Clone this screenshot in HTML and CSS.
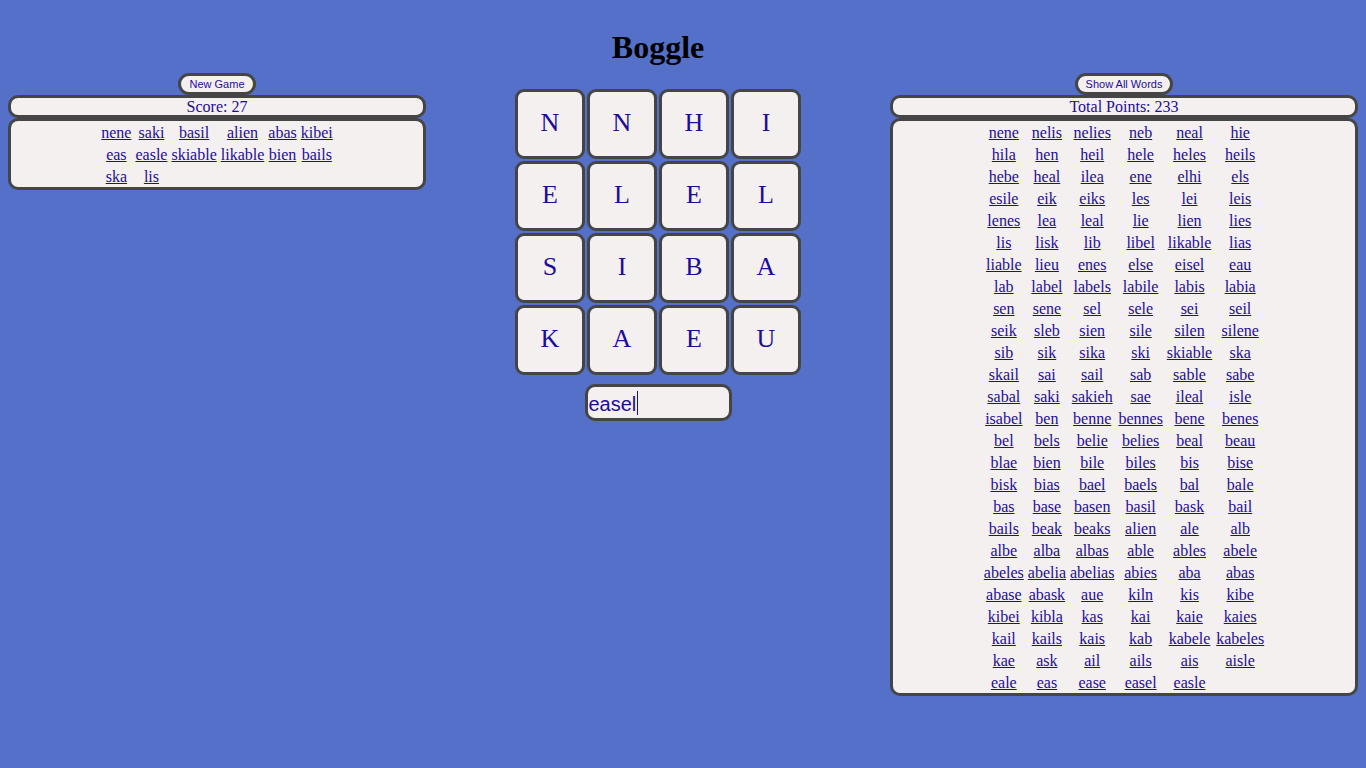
FILE: index.html
```html
<!DOCTYPE html>
<html lang="en">
<head>
<meta charset="utf-8">
<title>Boggle</title>
<link rel="stylesheet" href="styles.css">
</head>
<body>
<div class="page">
  <section class="side side-left">
    <button class="pill" type="button">New Game</button>
    <div class="box score">Score: 27</div>
    <div class="box words">
      <table class="word-table">
        <tr><td><a href="#">nene</a></td><td><a href="#">saki</a></td><td><a href="#">basil</a></td><td><a href="#">alien</a></td><td><a href="#">abas</a></td><td><a href="#">kibei</a></td></tr>
        <tr><td><a href="#">eas</a></td><td><a href="#">easle</a></td><td><a href="#">skiable</a></td><td><a href="#">likable</a></td><td><a href="#">bien</a></td><td><a href="#">bails</a></td></tr>
        <tr><td><a href="#">ska</a></td><td><a href="#">lis</a></td><td></td><td></td><td></td><td></td></tr>
      </table>
    </div>
  </section>

  <main class="center">
    <h1 class="title">Boggle</h1>
    <div class="board">
      <div class="tile">N</div><div class="tile">N</div><div class="tile">H</div><div class="tile">I</div>
      <div class="tile">E</div><div class="tile">L</div><div class="tile">E</div><div class="tile">L</div>
      <div class="tile">S</div><div class="tile">I</div><div class="tile">B</div><div class="tile">A</div>
      <div class="tile">K</div><div class="tile">A</div><div class="tile">E</div><div class="tile">U</div>
    </div>
    <div class="guess" role="textbox" aria-label="Guess">easel<span class="caret"></span></div>
  </main>

  <section class="side side-right">
    <button class="pill" type="button">Show All Words</button>
    <div class="box score">Total Points: 233</div>
    <div class="box words">
      <table class="word-table">
        <tr><td><a href="#">nene</a></td><td><a href="#">nelis</a></td><td><a href="#">nelies</a></td><td><a href="#">neb</a></td><td><a href="#">neal</a></td><td><a href="#">hie</a></td></tr>
        <tr><td><a href="#">hila</a></td><td><a href="#">hen</a></td><td><a href="#">heil</a></td><td><a href="#">hele</a></td><td><a href="#">heles</a></td><td><a href="#">heils</a></td></tr>
        <tr><td><a href="#">hebe</a></td><td><a href="#">heal</a></td><td><a href="#">ilea</a></td><td><a href="#">ene</a></td><td><a href="#">elhi</a></td><td><a href="#">els</a></td></tr>
        <tr><td><a href="#">esile</a></td><td><a href="#">eik</a></td><td><a href="#">eiks</a></td><td><a href="#">les</a></td><td><a href="#">lei</a></td><td><a href="#">leis</a></td></tr>
        <tr><td><a href="#">lenes</a></td><td><a href="#">lea</a></td><td><a href="#">leal</a></td><td><a href="#">lie</a></td><td><a href="#">lien</a></td><td><a href="#">lies</a></td></tr>
        <tr><td><a href="#">lis</a></td><td><a href="#">lisk</a></td><td><a href="#">lib</a></td><td><a href="#">libel</a></td><td><a href="#">likable</a></td><td><a href="#">lias</a></td></tr>
        <tr><td><a href="#">liable</a></td><td><a href="#">lieu</a></td><td><a href="#">enes</a></td><td><a href="#">else</a></td><td><a href="#">eisel</a></td><td><a href="#">eau</a></td></tr>
        <tr><td><a href="#">lab</a></td><td><a href="#">label</a></td><td><a href="#">labels</a></td><td><a href="#">labile</a></td><td><a href="#">labis</a></td><td><a href="#">labia</a></td></tr>
        <tr><td><a href="#">sen</a></td><td><a href="#">sene</a></td><td><a href="#">sel</a></td><td><a href="#">sele</a></td><td><a href="#">sei</a></td><td><a href="#">seil</a></td></tr>
        <tr><td><a href="#">seik</a></td><td><a href="#">sleb</a></td><td><a href="#">sien</a></td><td><a href="#">sile</a></td><td><a href="#">silen</a></td><td><a href="#">silene</a></td></tr>
        <tr><td><a href="#">sib</a></td><td><a href="#">sik</a></td><td><a href="#">sika</a></td><td><a href="#">ski</a></td><td><a href="#">skiable</a></td><td><a href="#">ska</a></td></tr>
        <tr><td><a href="#">skail</a></td><td><a href="#">sai</a></td><td><a href="#">sail</a></td><td><a href="#">sab</a></td><td><a href="#">sable</a></td><td><a href="#">sabe</a></td></tr>
        <tr><td><a href="#">sabal</a></td><td><a href="#">saki</a></td><td><a href="#">sakieh</a></td><td><a href="#">sae</a></td><td><a href="#">ileal</a></td><td><a href="#">isle</a></td></tr>
        <tr><td><a href="#">isabel</a></td><td><a href="#">ben</a></td><td><a href="#">benne</a></td><td><a href="#">bennes</a></td><td><a href="#">bene</a></td><td><a href="#">benes</a></td></tr>
        <tr><td><a href="#">bel</a></td><td><a href="#">bels</a></td><td><a href="#">belie</a></td><td><a href="#">belies</a></td><td><a href="#">beal</a></td><td><a href="#">beau</a></td></tr>
        <tr><td><a href="#">blae</a></td><td><a href="#">bien</a></td><td><a href="#">bile</a></td><td><a href="#">biles</a></td><td><a href="#">bis</a></td><td><a href="#">bise</a></td></tr>
        <tr><td><a href="#">bisk</a></td><td><a href="#">bias</a></td><td><a href="#">bael</a></td><td><a href="#">baels</a></td><td><a href="#">bal</a></td><td><a href="#">bale</a></td></tr>
        <tr><td><a href="#">bas</a></td><td><a href="#">base</a></td><td><a href="#">basen</a></td><td><a href="#">basil</a></td><td><a href="#">bask</a></td><td><a href="#">bail</a></td></tr>
        <tr><td><a href="#">bails</a></td><td><a href="#">beak</a></td><td><a href="#">beaks</a></td><td><a href="#">alien</a></td><td><a href="#">ale</a></td><td><a href="#">alb</a></td></tr>
        <tr><td><a href="#">albe</a></td><td><a href="#">alba</a></td><td><a href="#">albas</a></td><td><a href="#">able</a></td><td><a href="#">ables</a></td><td><a href="#">abele</a></td></tr>
        <tr><td><a href="#">abeles</a></td><td><a href="#">abelia</a></td><td><a href="#">abelias</a></td><td><a href="#">abies</a></td><td><a href="#">aba</a></td><td><a href="#">abas</a></td></tr>
        <tr><td><a href="#">abase</a></td><td><a href="#">abask</a></td><td><a href="#">aue</a></td><td><a href="#">kiln</a></td><td><a href="#">kis</a></td><td><a href="#">kibe</a></td></tr>
        <tr><td><a href="#">kibei</a></td><td><a href="#">kibla</a></td><td><a href="#">kas</a></td><td><a href="#">kai</a></td><td><a href="#">kaie</a></td><td><a href="#">kaies</a></td></tr>
        <tr><td><a href="#">kail</a></td><td><a href="#">kails</a></td><td><a href="#">kais</a></td><td><a href="#">kab</a></td><td><a href="#">kabele</a></td><td><a href="#">kabeles</a></td></tr>
        <tr><td><a href="#">kae</a></td><td><a href="#">ask</a></td><td><a href="#">ail</a></td><td><a href="#">ails</a></td><td><a href="#">ais</a></td><td><a href="#">aisle</a></td></tr>
        <tr><td><a href="#">eale</a></td><td><a href="#">eas</a></td><td><a href="#">ease</a></td><td><a href="#">easel</a></td><td><a href="#">easle</a></td><td></td></tr>
      </table>
    </div>
  </section>
</div>
</body>
</html>
```

FILE: styles.css
```css
html, body {
  margin: 0;
  padding: 0;
}

body {
  background: #5570c9;
  font-family: "Liberation Serif", "Times New Roman", serif;
  font-size: 16px;
  color: #1d0c96;
}

.page {
  display: flex;
  justify-content: space-between;
  align-items: flex-start;
  padding: 8px;
}

.side {
  display: flex;
  flex-direction: column;
  align-items: center;
  padding-top: 65px;
}

.side-left {
  width: 418px;
}

.side-right {
  width: 468px;
}

.pill {
  font-family: "Liberation Sans", Arial, sans-serif;
  font-size: 11px;
  line-height: 14px;
  padding: 1px 8px;
  margin: 0;
  color: #1d0c96;
  background: #f4f0f0;
  border: 3px solid #454545;
  border-radius: 11px;
}

.box {
  align-self: stretch;
  background: #f4f0f0;
  border: 3px solid #454545;
  border-radius: 10px;
  text-align: center;
}

.score {
  line-height: 17px;
}

.word-table {
  border-collapse: separate;
  border-spacing: 2px 0;
  margin: 0 auto;
}

.word-table td {
  height: 22px;
  box-sizing: border-box;
  padding: 2px 1px 0;
  line-height: 20px;
  text-align: center;
}

.word-table a {
  color: #1d0c96;
}

.center {
  width: 286px;
  display: flex;
  flex-direction: column;
  align-items: center;
  padding-top: 21px;
}

.title {
  margin: 0 0 23px;
  font-size: 32px;
  line-height: 37px;
  font-weight: bold;
  color: #000;
}

.board {
  display: grid;
  grid-template-columns: repeat(4, 70px);
  grid-auto-rows: 70px;
  gap: 2px;
}

.tile {
  box-sizing: border-box;
  background: #f4f0f0;
  border: 3px solid #454545;
  border-radius: 9px;
  font-size: 26px;
  line-height: 62px;
  text-align: center;
  color: #1d0c96;
}

.guess {
  box-sizing: border-box;
  width: 147px;
  height: 37px;
  margin-top: 9px;
  padding: 4px 1px 0;
  font-family: "Liberation Sans", Arial, sans-serif;
  font-size: 20px;
  line-height: 27px;
  color: #1d0c96;
  background: #f4f0f0;
  border: 3px solid #454545;
  border-radius: 10px;
  white-space: nowrap;
  overflow: hidden;
}

.caret {
  display: inline-block;
  width: 1px;
  height: 24px;
  margin-left: 1px;
  vertical-align: -4px;
  background: #1d0c96;
}
```
